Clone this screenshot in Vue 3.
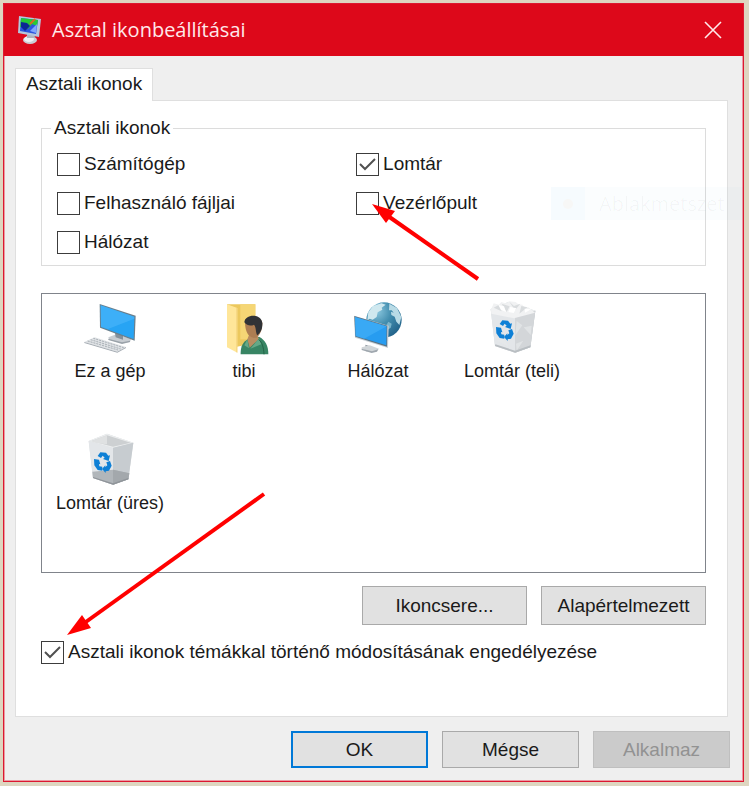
<template>
    <div class="desktop">
        <div class="window" role="dialog" aria-labelledby="title">
            <header class="titleBar">
                <svg class="titleIcon" viewBox="0 0 26 30" aria-hidden="true">
                    <ellipse cx="13" cy="25" rx="7" ry="4" fill="#c9ced5" />
                    <ellipse cx="12" cy="24" rx="5" ry="3" fill="#eef0f3" />
                    <path d="M10 18h7l1 5h-8z" fill="#aeb5bd" />
                    <path d="M2 1l22 3-2 18L1 18z" fill="#b4c6dc" />
                    <path d="M4 3l17 2-2 14L3 16z" fill="#2b55dc" />
                    <path d="M4 3l17 2-1 6-5-2-4 5-4-3-4 1z" fill="#25c936" />
                    <path d="M4 7l6 1 3 3-5 5-4-4z" fill="#0b2795" />
                    <path d="M13 9l5-5" stroke="#d66c22" stroke-width="2" />
                    <path d="M13 16l7-7-1 9z" fill="#7fa5ff" />
                </svg>
                <h1 id="title">Asztal ikonbeállításai</h1>
                <button class="closeButton" aria-label="Bezárás">
                    <svg viewBox="0 0 18 18" aria-hidden="true">
                        <path d="M1 1l16 16M17 1L1 17" stroke="#ffe9ea" stroke-width="1.6" />
                    </svg>
                </button>
            </header>

            <main class="content">
                <div role="tablist">
                    <button class="tab" role="tab" aria-selected="true">Asztali ikonok</button>
                </div>

                <section class="panel">
                    <fieldset>
                        <legend>Asztali ikonok</legend>
                        <div class="options">
                            <div v-for="column in columns" :key="column[0].id" class="column">
                                <label v-for="option in column" :key="option.id" class="check">
                                    <input v-model="option.checked" type="checkbox">
                                    <span>{{ option.label }}</span>
                                    <svg
                                        v-if="option.id === 'control'"
                                        class="arrow controlArrow"
                                        viewBox="0 0 110 80"
                                        aria-hidden="true"
                                    >
                                        <path d="M106 76L16 13" stroke="#f00" stroke-width="4" />
                                        <path d="M0 1L23 8L14 20z" fill="#f00" />
                                    </svg>
                                </label>
                            </div>
                        </div>
                    </fieldset>

                    <ul class="iconList">
                        <li v-for="icon in icons" :key="icon.label">
                            <svg v-if="icon.type === 'computer'" viewBox="0 0 162 162" aria-hidden="true">
                                <path d="M76 109l24-9 44 14-3 9-24 4-38-11z" fill="#c8cdd2" />
                                <path d="M76 113l41 11 24-5v4l-24 6-41-12z" fill="#9aa2a9" />
                                <path d="M95 90l25 8v18l-22-7z" fill="#84909a" />
                                <path d="M50 9l108 35-3 75-104-39z" fill="#6b7f8c" />
                                <path d="M53 13l101 34-2 67-98-36z" fill="#27a4f4" />
                                <path d="M53 13l101 34v6L75 84l-21-7z" fill="#4db7fa" opacity=".6" />
                                <path d="M35 109l94 29-26 14-99-29z" fill="#dfe2e5" />
                                <path d="M4 123l99 29 26-14v3l-26 14-99-29z" fill="#a3aab1" />
                                <path
                                    d="M31 112l91 28M23 116l90 28M14 120l91 27"
                                    stroke="#a9b0b6"
                                    stroke-width="3"
                                    stroke-dasharray="6 3"
                                />
                            </svg>

                            <svg v-else-if="icon.type === 'user'" viewBox="0 0 162 162" aria-hidden="true">
                                <path d="M30 10h85v115l-55 12z" fill="#ecc85d" />
                                <path d="M70 10h45v105H70z" fill="#f5d675" />
                                <path d="M30 10l31 11v134l-31-16z" fill="#ffe699" />
                                <path d="M58 20l3 1v134l-3-2z" fill="#f3d27c" />
                                <path d="M71 160c-1-22 6-38 24-47l31-6c19 10 28 26 28 53z" fill="#388564" />
                                <path d="M91 115l7 25 28-26-8-16-22 4z" fill="#b98d61" />
                                <path d="M91 115l5 27-14-9zM126 112l-26 31 33-13z" fill="#65a887" />
                                <path d="M84 62c0-18 51-20 52 5 0 18-6 34-17 43-16 3-35-7-35-48z" fill="#ad7d52" />
                                <path d="M82 64c1-25 51-29 54 3 1 17-5 28-15 36-6-9-3-25-10-32-8 4-20 5-29-7z" fill="#303236" />
                                <path d="M125 116c10 7 15 22 16 44" stroke="#236346" stroke-width="3" fill="none" />
                            </svg>

                            <svg v-else-if="icon.type === 'network'" viewBox="0 0 162 162" aria-hidden="true">
                                <defs>
                                    <radialGradient id="globe" cx=".3" cy=".25" r=".8">
                                        <stop offset="0" stop-color="#8cc8df" />
                                        <stop offset=".5" stop-color="#438eaf" />
                                        <stop offset="1" stop-color="#24658c" />
                                    </radialGradient>
                                </defs>
                                <circle cx="99" cy="57" r="53" fill="url(#globe)" />
                                <path d="M52 34l14-19 25-8 13 4-12 9 2 6-14 8-3 14-12 8-9-3-7 5z" fill="#cfe8ef" />
                                <path d="M115 8l23 13 13 27-6 24-9-10-5-15-10-5-1-10 8 3-6-7-8 0z" fill="#b9dbe6" />
                                <path d="M112 62l10 6-3 12-9 6-4-14z" fill="#79b3ca" />
                                <path d="M43 131l21 7v13H45z" fill="#8a959e" />
                                <path d="M32 139l24-6 28 10-7 7-15 4-30-10z" fill="#d0d5d8" />
                                <path d="M32 143l31 8 19-6-4 7-16 4-30-9z" fill="#9fa7ae" />
                                <path d="M9 44l104 30-2 67-99-31z" fill="#c8d1d7" />
                                <path d="M10 45l99 29-1 63-95-30z" fill="#5b7282" />
                                <path d="M12 48l95 28-1 57-92-28z" fill="#279cf0" />
                                <path d="M12 48l95 28-68 37-25-8z" fill="#46b2f8" opacity=".6" />
                            </svg>

                            <svg v-else viewBox="0 0 162 162" aria-hidden="true">
                                <path d="M17 24l55-22 79 27-15 110-46 16-60-20z" fill="#d8dcdf" />
                                <path d="M17 24l55-22 79 27-61 17z" fill="#eceeef" />
                                <path d="M25 24l47-17 71 22-53 12z" fill="#cdd0d2" />
                                <path d="M72 7v27L39 30l-14-6z" fill="#dfe1e2" />
                                <path d="M17 24l73 20v111l-60-20z" fill="#e3e6e9" />
                                <path d="M90 44l61-15-15 110-46 16z" fill="#c7ccd0" />
                                <template v-if="icon.type === 'full'">
                                    <path d="M90 44l61-15-15 110-46 16z" fill="#d3d6d9" />
                                    <path d="M18 26l8-19 16 4 7-8 16 5 8-7 19 2 8 7 13 1 2 9 15-1 20 16-63 17-68-14z" fill="#f1f2f3" />
                                    <path d="M26 20l15-8 9 19zM50 8l24 8-9 17zM73 2l14 13 19-7-16 20zM109 15l18 4-24 19z" fill="#d9dcde" />
                                    <path d="M40 12l17 4 6 17-15-7zM76 18l18 4-8 14-16-3zM119 23l19 2-18 10z" fill="#fff" />
                                    <path d="M95 60l17 13-21 30zM140 74l-24 5 21 23zM35 119l21-7 14 24zM93 128l22-9-20 30z" fill="#e6e8ea" opacity=".7" />
                                    <path d="M31 130l59 19 47-16-1 6-46 16-60-20z" fill="#b9bec2" />
                                </template>
                                <template v-else>
                                    <path d="M28 116l62-6 49 11-3 18-46 16-60-20z" fill="#b1b6ba" />
                                    <path d="M90 110l49 11-3 18-46 16z" fill="#a3a8ac" />
                                    <path d="M30 132l60 19 46-16v4l-46 16-60-20z" fill="#8f9499" />
                                </template>
                                <!-- recycling mark: three turning bands -->
                                <g fill="#0e80d6">
                                    <path d="M44 69l8-11 17 1 7 9 5-1-4 17-17-6 5-4-6-6-5 7z" />
                                    <path d="M33 78l15 2 4 14-4-1 1 7 9 1v12l-14-2-10-14z" />
                                    <path d="M70 88l11-4 5 14-8 15-10 2v5l-11-12 10-11v5l6-5z" />
                                </g>
                            </svg>
                            <span>{{ icon.label }}</span>
                        </li>
                    </ul>

                    <div class="iconButtons">
                        <button class="button wide">Ikoncsere...</button>
                        <button class="button wide">Alapértelmezett</button>
                    </div>

                    <label class="check">
                        <input v-model="allowThemes" type="checkbox">
                        <span>Asztali ikonok témákkal történő módosításának engedélyezése</span>
                        <svg class="arrow themeArrow" viewBox="0 0 200 144" aria-hidden="true">
                            <path d="M197 2L16 132" stroke="#f00" stroke-width="4" />
                            <path d="M0 143L15 123L24 136z" fill="#f00" />
                        </svg>
                    </label>
                </section>
            </main>

            <footer>
                <button class="button primary">OK</button>
                <button class="button">Mégse</button>
                <button class="button" disabled>Alkalmaz</button>
            </footer>

            <div class="snipHint">
                <span class="snipDot"></span>
                <span class="snipText">Ablakmetszet</span>
            </div>
        </div>
    </div>
</template>

<script setup>
import { ref } from 'vue'

const columns = ref([
    [
        { id: 'computer', label: 'Számítógép', checked: false },
        { id: 'files', label: 'Felhasználó fájljai', checked: false },
        { id: 'network', label: 'Hálózat', checked: false }
    ],
    [
        { id: 'bin', label: 'Lomtár', checked: true },
        { id: 'control', label: 'Vezérlőpult', checked: false }
    ]
])

const icons = [
    { type: 'computer', label: 'Ez a gép' },
    { type: 'user', label: 'tibi' },
    { type: 'network', label: 'Hálózat' },
    { type: 'full', label: 'Lomtár (teli)' },
    { type: 'empty', label: 'Lomtár (üres)' }
]

const allowThemes = ref(true)
</script>

<style>
body {
    background: #ded6c0;
}
</style>

<style scoped>
* {
    box-sizing: border-box;
}

.desktop {
    display: flex;
    min-height: 100vh;
    padding: 3px 5px 4px 3px;
    font-family: "Liberation Sans", Arial, sans-serif;
    font-size: 19px;
    line-height: 24px;
    color: #1a1a1a;
}

.window {
    position: relative;
    display: flex;
    flex-direction: column;
    flex: 1;
    min-width: 0;
    background: #efefef;
    border: 1px solid #dc1830;
    box-shadow: inset 0 0 0 1px #eb9aa2;
}

.titleBar {
    display: flex;
    align-items: center;
    height: 52px;
    padding: 0 21px 0 13px;
    background: #dd081a;
    color: #ffe9ea;
}

.titleIcon {
    width: 26px;
    height: 30px;
}

h1 {
    flex: 1;
    margin: 0 0 0 9px;
    font-family: "Open Sans", "Noto Sans", sans-serif;
    font-size: 20px;
    font-weight: 400;
}

.closeButton {
    display: flex;
    padding: 0;
    border: none;
    background: none;
}

.closeButton svg {
    width: 18px;
    height: 18px;
}

.content {
    display: flex;
    flex-direction: column;
    flex: 1;
    padding: 12px 15px 0 11px;
}

.tab {
    position: relative;
    z-index: 1;
    display: block;
    height: 33px;
    margin-bottom: -1px;
    padding: 0 10px 2px;
    border: 1px solid #dfdfdf;
    border-bottom: none;
    background: #fff;
    color: inherit;
    font: inherit;
}

.panel {
    flex: 1;
    padding: 15px 21px 16px 25px;
    border: 1px solid #dfdfdf;
    background: #fff;
}

fieldset {
    height: 150px;
    min-width: 0;
    margin: 0;
    padding: 0 0 12px 15px;
    border: 1px solid #dcdcdc;
}

legend {
    margin-left: -6px;
    padding: 0 3px;
}

.options {
    display: grid;
    grid-template-columns: 6fr 7fr;
    padding-top: 12px;
}

.column {
    display: flex;
    flex-direction: column;
    gap: 15px;
}

.check {
    position: relative;
    display: flex;
    align-items: center;
    align-self: flex-start;
    gap: 4px;
}

.check input {
    appearance: none;
    flex: none;
    width: 23px;
    height: 23px;
    margin: 0;
    border: 1px solid #3c3c3c;
    background: #fff;
}

.check input:checked {
    background: #fff url("data:image/svg+xml,%3Csvg xmlns='http://www.w3.org/2000/svg' viewBox='0 0 19 19'%3E%3Cpath d='M2 9l5 5L17 4' fill='none' stroke='%23505050' stroke-width='2'/%3E%3C/svg%3E") center / 19px 19px no-repeat;
}

.arrow {
    position: absolute;
    pointer-events: none;
}

.controlArrow {
    top: 12px;
    left: 16px;
    width: 110px;
    height: 80px;
}

.themeArrow {
    bottom: 28px;
    left: 26px;
    width: 200px;
    height: 144px;
}

.iconList {
    display: flex;
    flex-wrap: wrap;
    align-content: flex-start;
    row-gap: 50px;
    min-height: 280px;
    margin: 27px 0 13px;
    padding: 7px 0 7px 1px;
    border: 1px solid #80848b;
    list-style: none;
}

.iconList li {
    display: flex;
    flex-direction: column;
    align-items: center;
    gap: 4px;
    width: 134px;
    font-size: 18px;
}

.iconList svg {
    width: 54px;
    height: 54px;
}

.iconButtons {
    display: flex;
    justify-content: flex-end;
    gap: 14px;
    margin-bottom: 15px;
}

.button {
    width: 137px;
    height: 37px;
    padding: 0;
    border: 1px solid #a9a9a9;
    background: #e1e1e1;
    color: inherit;
    font: inherit;
}

.wide {
    width: 165px;
    height: 39px;
}

.primary {
    border: 2px solid #0078d7;
}

.button:disabled {
    border-color: #bfbfbf;
    background: #cbcbcb;
    color: #929292;
}

footer {
    display: flex;
    justify-content: flex-end;
    gap: 14px;
    padding: 14px 13px 13px;
}

.snipHint {
    position: absolute;
    top: 183px;
    right: 0;
    display: flex;
    width: 192px;
    height: 33px;
    background: rgba(0, 100, 220, .015);
    color: rgba(0, 0, 0, .035);
    font-family: "Open Sans", "Noto Sans", sans-serif;
    font-size: 20px;
    line-height: 33px;
    pointer-events: none;
}

.snipDot {
    display: flex;
    align-items: center;
    justify-content: center;
    width: 34px;
    background: rgba(0, 130, 255, .02);
}

.snipDot::before {
    content: "";
    width: 10px;
    height: 10px;
    border-radius: 50%;
    background: #f7f7f6;
}

.snipText {
    margin-left: 14px;
}
</style>
